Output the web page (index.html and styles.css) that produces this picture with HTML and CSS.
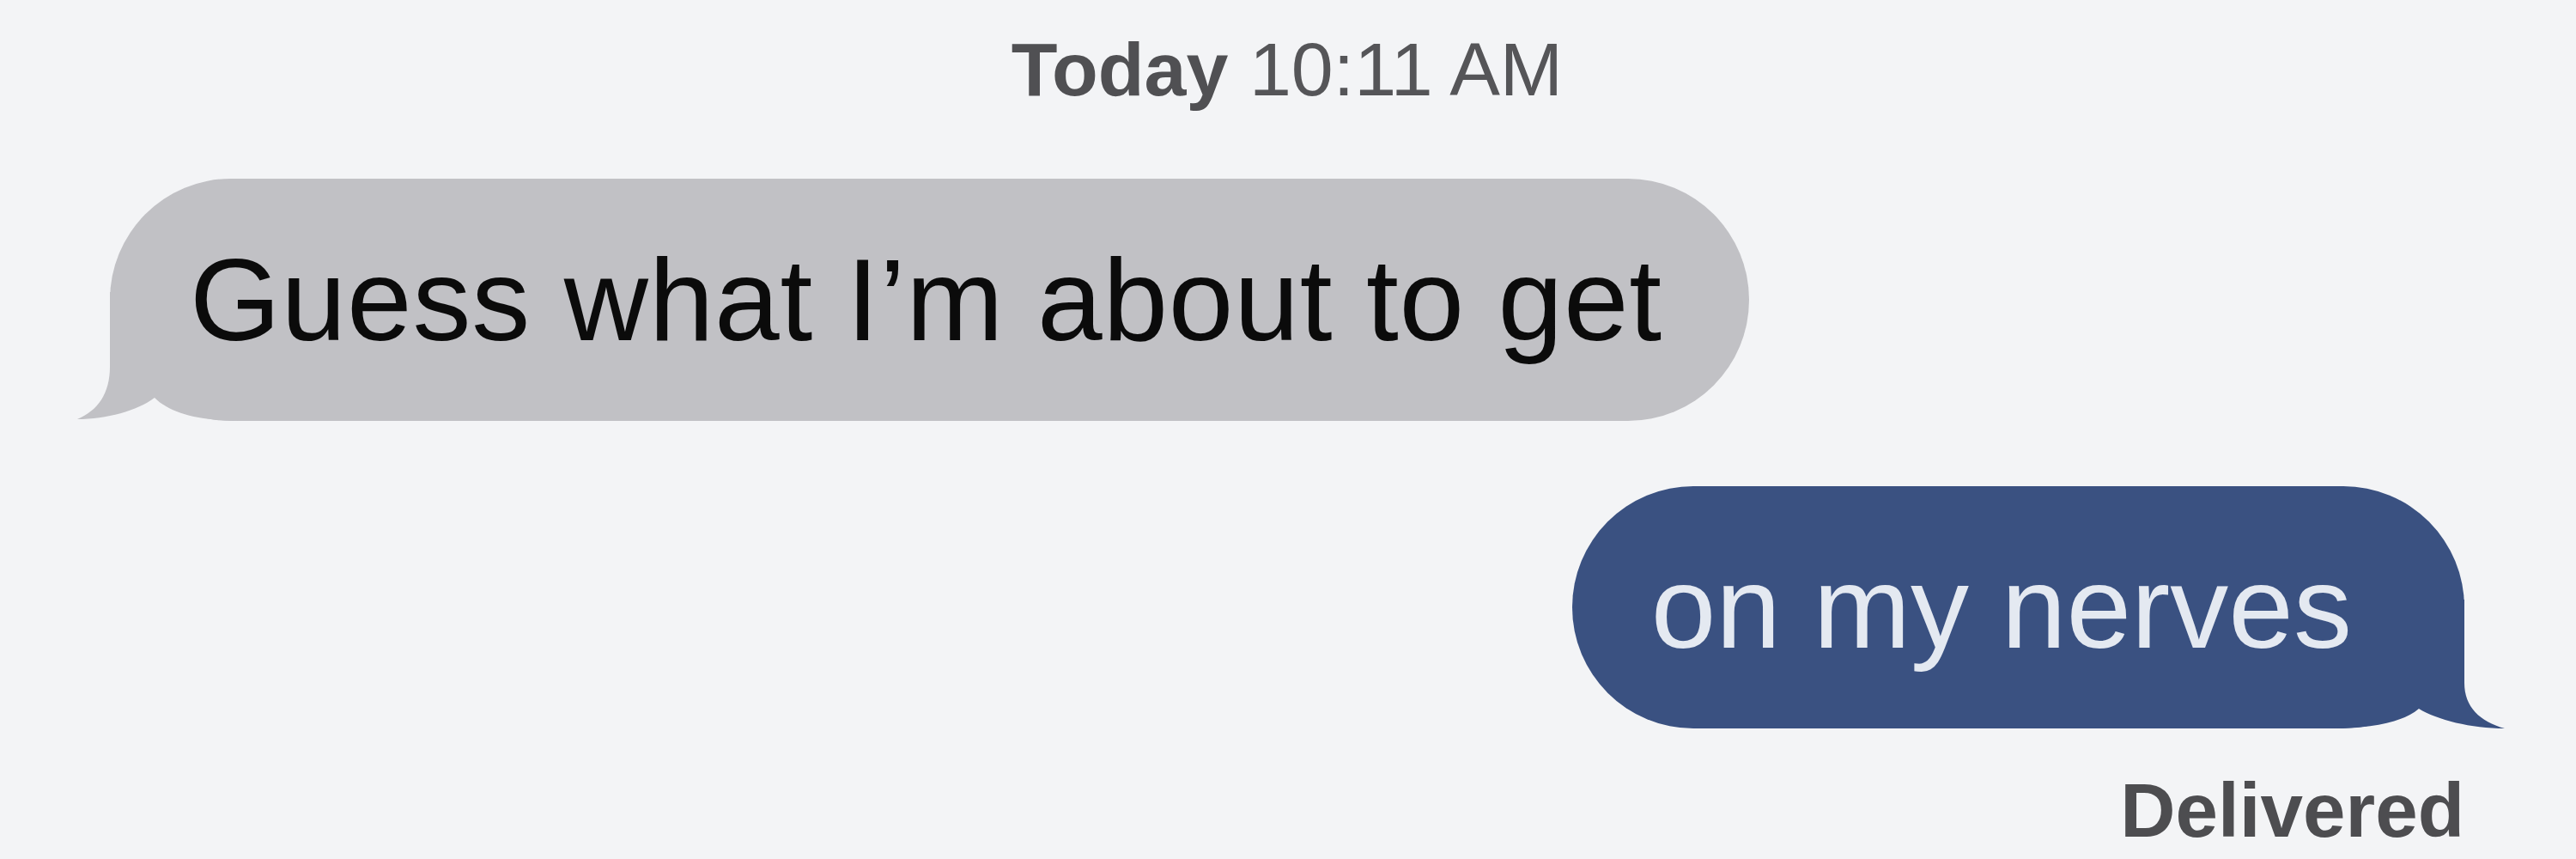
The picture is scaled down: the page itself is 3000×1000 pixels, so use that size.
FILE: index.html
```html
<!DOCTYPE html>
<html lang="en">
<head>
    <meta charset="utf-8" />
    <title>Messages</title>
    <link rel="stylesheet" href="styles.css">
</head>
<body>
    <div class="thread">
        <div class="stamp"><b>Today</b> 10:11 AM</div>

        <div class="bubble received">
            <svg class="tail" viewBox="0 0 200 150" aria-hidden="true">
                <path d="M44 0 L44 87 C44 118 30 138 6 148 C40 148 76 138 96 123 C115 142 150 150 200 150 L200 0 Z" />
            </svg>
            <span class="text">Guess what I’m about to get</span>
        </div>

        <div class="bubble sent">
            <svg class="tail" viewBox="0 0 210 150" aria-hidden="true">
                <path d="M53 0 L53 97 C53 125 35 142 6 150 C45 150 85 140 106 127 C125 143 160 150 210 150 L210 0 Z" />
            </svg>
            <span class="text">on my nerves</span>
        </div>

        <div class="status">Delivered</div>
    </div>
</body>
</html>
```

FILE: styles.css
```css
body {
    margin: 0;
    background: #f3f4f6;
    font-family: "Liberation Sans", Arial, sans-serif;
}

.thread {
    display: flex;
    flex-direction: column;
    padding: 31px 130px 0 128px;
    height: 1000px;
    box-sizing: border-box;
}

.stamp {
    align-self: center;
    font-size: 88px;
    line-height: 100px;
    color: #555558;
}

.stamp b {
    color: #505053;
}

.bubble {
    position: relative;
    font-size: 136px;
    line-height: 162px;
    border-radius: 141px;
    white-space: nowrap;
}

.bubble .text {
    position: relative;
    z-index: 1;
}

.bubble .tail {
    position: absolute;
    bottom: 0;
    height: 150px;
}

.received {
    align-self: flex-start;
    margin-top: 77px;
    padding: 60px 101px 60px 93px;
    letter-spacing: 0.8px;
    background: #c1c1c5;
    color: #0b0b0b;
}

.received .tail {
    left: -44px;
    width: 200px;
    fill: #c1c1c5;
}

.sent {
    align-self: flex-end;
    margin-top: 76px;
    padding: 60px 131px 60px 92px;
    background: #3a5181;
    color: #e4e9f1;
}

.sent .tail {
    right: -53px;
    width: 210px;
    fill: #3a5181;
    transform: scaleX(-1);
}

.status {
    align-self: flex-end;
    margin-top: 45px;
    font-size: 89px;
    line-height: 100px;
    font-weight: bold;
    color: #4d4d50;
}
```
